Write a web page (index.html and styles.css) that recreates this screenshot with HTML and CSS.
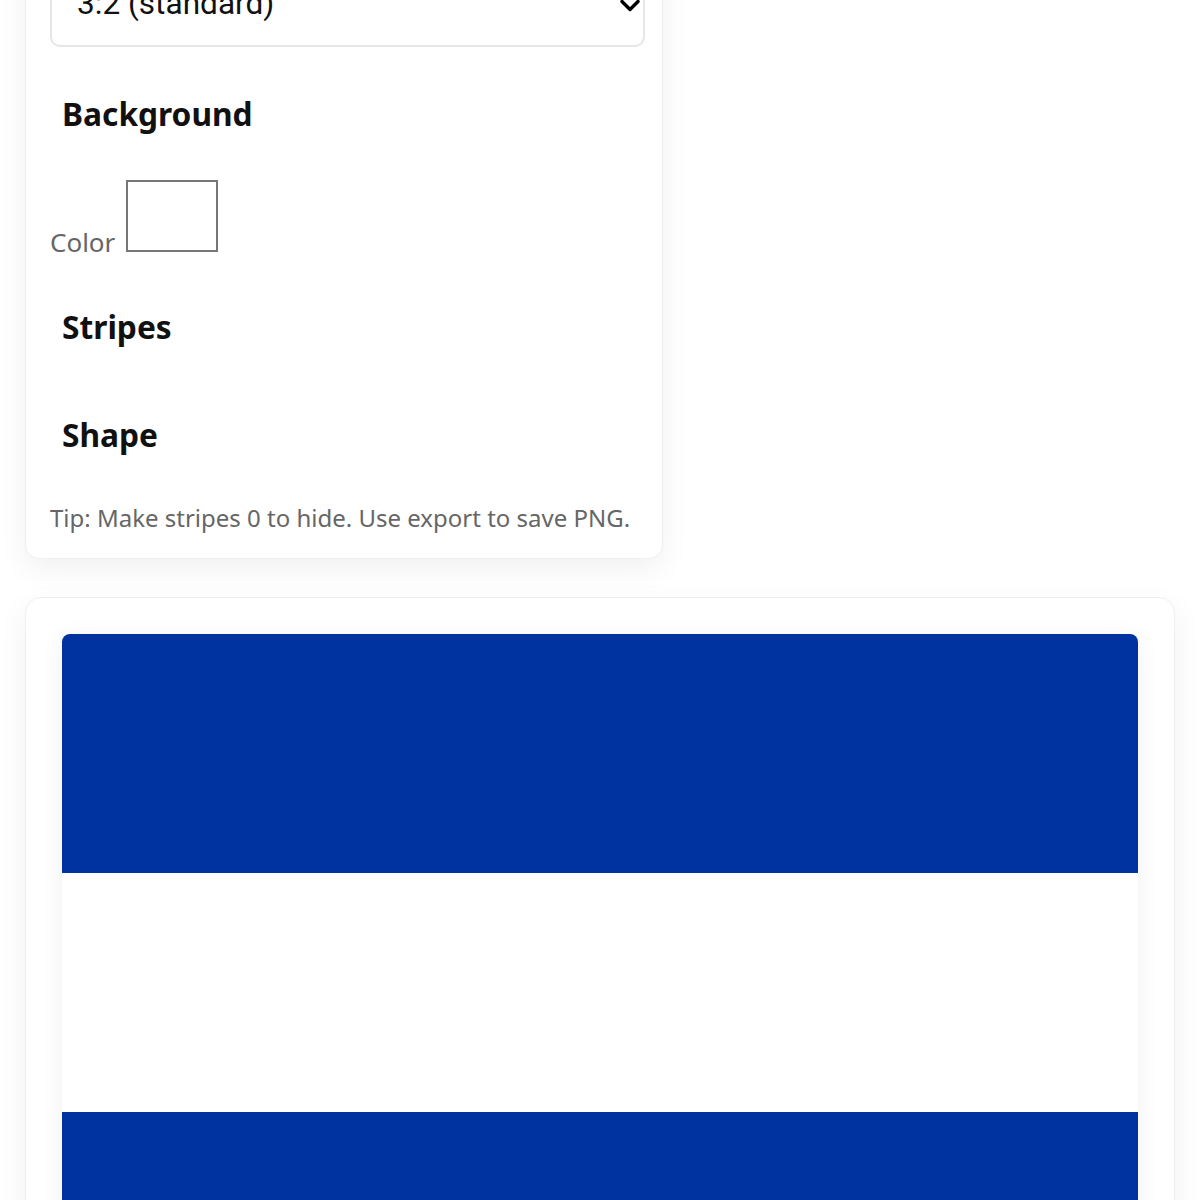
FILE: index.html
```html
<!DOCTYPE html>
<html lang="en">
<head>
<meta charset="utf-8">
<title>Flag maker</title>
<link rel="stylesheet" href="styles.css">
</head>
<body>
<main class="page">
  <section class="card controls">
    <div class="field-label">Aspect ratio</div>
    <div class="select">
      <span class="select-text">3:2 (standard)</span>
      <svg class="chevron" width="20" height="13" viewBox="0 0 20 13" aria-hidden="true"><path d="M2 2.5 L10 10.5 L18 2.5" fill="none" stroke="#000" stroke-width="3.4" stroke-linecap="round" stroke-linejoin="round"/></svg>
    </div>
    <h3 class="heading bg-heading">Background</h3>
    <div class="color-row"><span class="color-label">Color</span> <span class="swatch"></span></div>
    <h3 class="heading stripes-heading">Stripes</h3>
    <h3 class="heading shape-heading">Shape</h3>
    <p class="tip">Tip: Make stripes 0 to hide. Use export to save PNG.</p>
  </section>
  <section class="card preview">
    <div class="flag">
      <div class="stripe blue"></div>
      <div class="stripe white"></div>
      <div class="stripe blue"></div>
    </div>
  </section>
</main>
</body>
</html>
```
FILE: styles.css
```css
* { box-sizing: border-box; }
html, body { margin: 0; padding: 0; background: #fff; }
body { font-family: "Noto Sans", "Open Sans", sans-serif; color: #111; overflow: hidden; }
.page {
  display: flex;
  flex-direction: column;
  align-items: flex-start;
  gap: 38px;
  padding: 0 25px;
  margin-top: -77px;
}
.card {
  background: #fff;
  border: 1px solid #efefef;
  border-radius: 14px;
  box-shadow: 0 10px 30px rgba(0,0,0,0.06);
}
.controls {
  width: 638px;
  padding: 24px 17px 22px 24px;
}
.field-label {
  font-size: 24px;
  line-height: 39px;
  height: 39px;
  color: #666;
  overflow: hidden;
}
.select {
  position: relative;
  height: 60px;
  border: 2px solid #e6e6e6;
  border-radius: 10px;
  padding-left: 25px;
  font-family: Roboto, "Noto Sans", sans-serif;
  font-size: 31.6px;
  line-height: 30px;
  color: #111;
}
.select-text { display: block; }
.chevron { position: absolute; right: 3px; top: 10px; }
.heading {
  margin: 0;
  padding-left: 12px;
  font-size: 31.7px;
  line-height: 40px;
  font-weight: 700;
  color: #111;
}
.bg-heading { margin-top: 47px; }
.color-row {
  margin-top: 46px;
  font-size: 26px;
  color: #666;
  line-height: normal;
}
.color-label { vertical-align: baseline; }
.swatch {
  display: inline-block;
  width: 92px;
  height: 72px;
  border: 2px solid #777;
  background: #fff;
  vertical-align: baseline;
  margin-left: 4px;
}
.stripes-heading { margin-top: 47px; }
.shape-heading { margin-top: 68px; }
.tip {
  margin: 45px 0 0 0;
  font-size: 24px;
  line-height: 36px;
  color: #666;
}
.preview {
  width: 1150px;
  border-radius: 16px;
  padding: 36px;
}
.flag {
  width: 100%;
  aspect-ratio: 3 / 2;
  border-radius: 8px;
  overflow: hidden;
  display: grid;
  grid-template-rows: 1fr 1fr 1fr;
  box-shadow: 0 4px 24px rgba(0,0,0,0.06);
}
.stripe.blue { background: #0033a0; }
.stripe.white { background: #fff; }
```
